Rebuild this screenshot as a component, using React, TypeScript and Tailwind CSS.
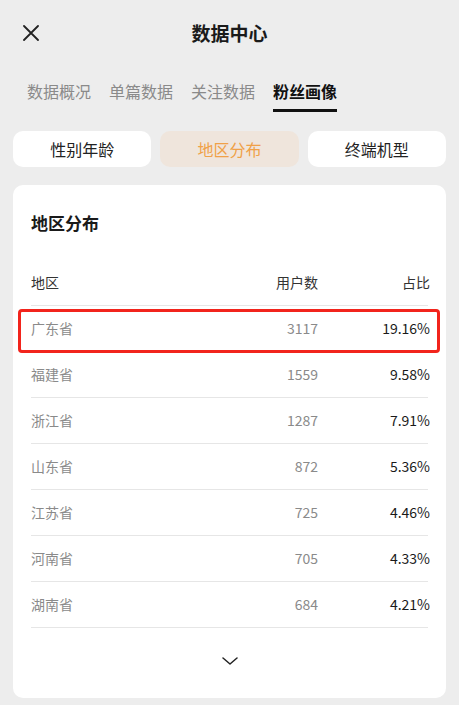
import React from 'react';

const tabs = ['数据概况', '单篇数据', '关注数据', '粉丝画像'];
const segments = ['性别年龄', '地区分布', '终端机型'];

const rows = [
    { region: '广东省', count: 3117, pct: '19.16%' },
    { region: '福建省', count: 1559, pct: '9.58%' },
    { region: '浙江省', count: 1287, pct: '7.91%' },
    { region: '山东省', count: 872, pct: '5.36%' },
    { region: '江苏省', count: 725, pct: '4.46%' },
    { region: '河南省', count: 705, pct: '4.33%' },
    { region: '湖南省', count: 684, pct: '4.21%' },
];

const font = { fontFamily: '"Noto Sans CJK SC", "Noto Sans", sans-serif' };

const App: React.FC = () => {
    return (
        <div className="min-h-[705px] w-full bg-[#ededed] pb-[7px]" style={font}>
            {/* nav bar */}
            <div className="grid h-[66px] grid-cols-[1fr_auto_1fr] items-center">
                <div className="pl-[23px]">
                    <svg width="16" height="16" viewBox="0 0 16 16" fill="none">
                        <path
                            d="M1 1L15 15M15 1L1 15"
                            stroke="#222"
                            strokeWidth="1.8"
                            strokeLinecap="round"
                        />
                    </svg>
                </div>
                <h1 className="text-[19px] font-semibold leading-6 text-[#1a1a1a]">
                    数据中心
                </h1>
                <div />
            </div>

            {/* tabs */}
            <div className="flex gap-[18px] px-[27px] pt-[13px]">
                {tabs.map((t, i) => {
                    const active = i === 3;
                    return (
                        <div key={t} className="flex flex-col">
                            <span
                                className={`text-[16px] leading-6 ${
                                    active
                                        ? 'font-bold text-[#111]'
                                        : 'text-[#8a8a8a]'
                                }`}
                            >
                                {t}
                            </span>
                            <div
                                className={`mt-[6px] h-[3px] ${
                                    active ? 'bg-[#111]' : 'bg-transparent'
                                }`}
                            />
                        </div>
                    );
                })}
            </div>

            {/* segments */}
            <div className="mt-[19px] flex gap-[9px] px-[13px]">
                {segments.map((s, i) => {
                    const active = i === 1;
                    return (
                        <button
                            key={s}
                            className={`h-[36px] flex-1 rounded-[10px] text-[16px] ${
                                active
                                    ? 'bg-[#efe5dc] text-[#f0a148]'
                                    : 'bg-white text-[#222]'
                            }`}
                        >
                            {s}
                        </button>
                    );
                })}
            </div>

            {/* card */}
            <div className="mx-[13px] mt-[18px] rounded-[10px] bg-white px-[18px] pt-[26px]">
                <h2 className="text-[17px] font-semibold leading-6 text-[#1a1a1a]">
                    地区分布
                </h2>

                <div className="mt-[25px]">
                    <div className="flex h-[46px] items-center border-b border-[#e6e6e6] text-[14px] text-[#333]">
                        <span className="flex-1">地区</span>
                        <span className="text-right">用户数</span>
                        <span className="-mr-[2px] w-[112px] text-right">占比</span>
                    </div>
                    {rows.map((r, i) => (
                        <div key={r.region} className="relative">
                            <div className="flex h-[46px] items-center border-b border-[#e6e6e6] text-[14px]">
                                <span className="flex-1 text-[#8a8a8a]">{r.region}</span>
                                <span className="text-right text-[#8a8a8a]">{r.count}</span>
                                <span className="-mr-[2px] w-[112px] text-right text-[#1a1a1a]">
                                    {r.pct}
                                </span>
                            </div>
                            {i === 0 && (
                                <div className="pointer-events-none absolute top-[3px] -right-[12px] -bottom-[1px] -left-[13px] rounded-[4px] border-[3px] border-[#f2241c]" />
                            )}
                        </div>
                    ))}
                </div>

                <div className="flex justify-center pt-[29px] pb-[33px]">
                    <svg width="16" height="8" viewBox="0 0 16 8" fill="none">
                        <path
                            d="M1 1L8 7L15 1"
                            stroke="#222"
                            strokeWidth="1.5"
                            strokeLinecap="round"
                            strokeLinejoin="round"
                        />
                    </svg>
                </div>
            </div>
        </div>
    );
};

export default App;
